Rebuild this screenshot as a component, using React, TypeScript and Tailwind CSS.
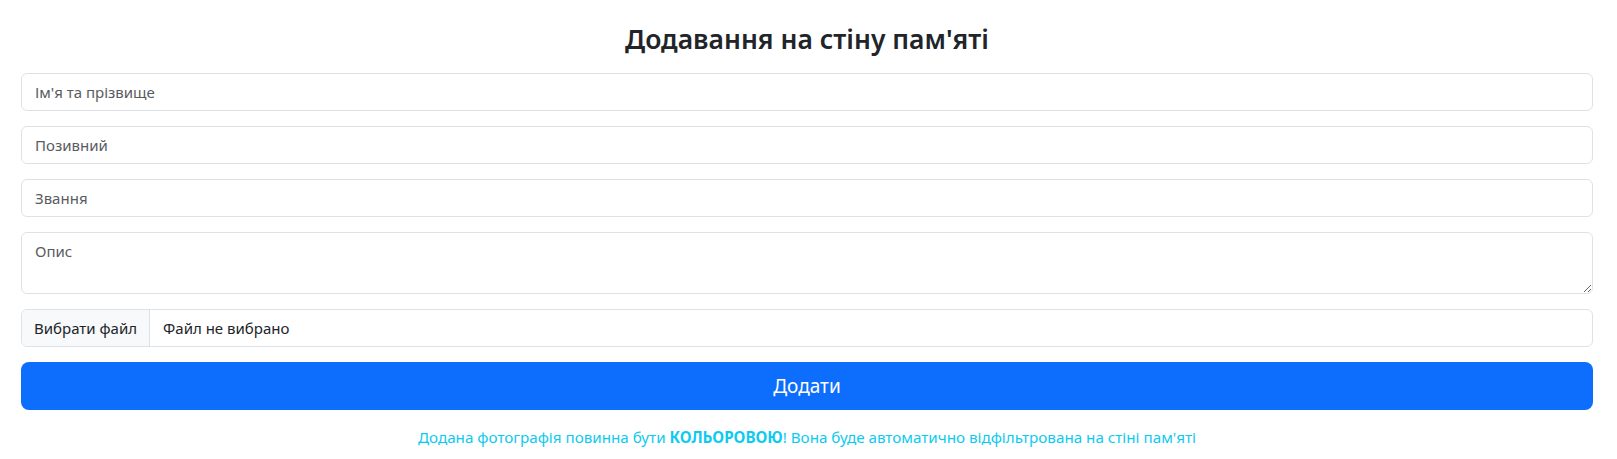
export default function App() {
  return (
    <div
      className="min-h-screen bg-white pt-[22px] pl-[21px] pr-[24px] text-[#212529]"
      style={{ fontFamily: '"Noto Sans", "Open Sans", sans-serif' }}
    >
      <h3 className="text-center text-[26.5px] leading-[34px] font-semibold mb-[17px]">
        Додавання на стіну пам'яті
      </h3>
      <form className="flex flex-col gap-[15px]">
        <input
          type="text"
          placeholder="Ім'я та прізвище"
          className="h-[38px] w-full border border-[#dee2e6] rounded-[6px] px-[13px] text-[15px] outline-none placeholder:text-[#595c5f]"
        />
        <input
          type="text"
          placeholder="Позивний"
          className="h-[38px] w-full border border-[#dee2e6] rounded-[6px] px-[13px] text-[15px] outline-none placeholder:text-[#595c5f]"
        />
        <input
          type="text"
          placeholder="Звання"
          className="h-[38px] w-full border border-[#dee2e6] rounded-[6px] px-[13px] text-[15px] outline-none placeholder:text-[#595c5f]"
        />
        <textarea
          rows={2}
          placeholder="Опис"
          className="block h-[62px] w-full border border-[#dee2e6] rounded-[6px] px-[13px] py-[6px] text-[15px] leading-[24px] outline-none placeholder:text-[#595c5f]"
        />
        <div className="flex h-[38px] w-full border border-[#dee2e6] rounded-[6px] overflow-hidden text-[15px] font-normal">
          <div className="flex items-center px-[12px] bg-[#f8f9fa] border-r border-[#dee2e6]">
            Вибрати файл
          </div>
          <div className="flex items-center pl-[13px]">Файл не вибрано</div>
        </div>
        <button
          type="submit"
          className="h-[48px] w-full rounded-[8px] bg-[#0d6efd] text-white text-[19px]"
        >
          Додати
        </button>
        <p className="text-center text-[#0dcaf0] text-[15.2px] leading-[24px]">
          Додана фотографія повинна бути <b>КОЛЬОРОВОЮ</b>! Вона буде
          автоматично відфільтрована на стіні пам'яті
        </p>
      </form>
    </div>
  );
}
